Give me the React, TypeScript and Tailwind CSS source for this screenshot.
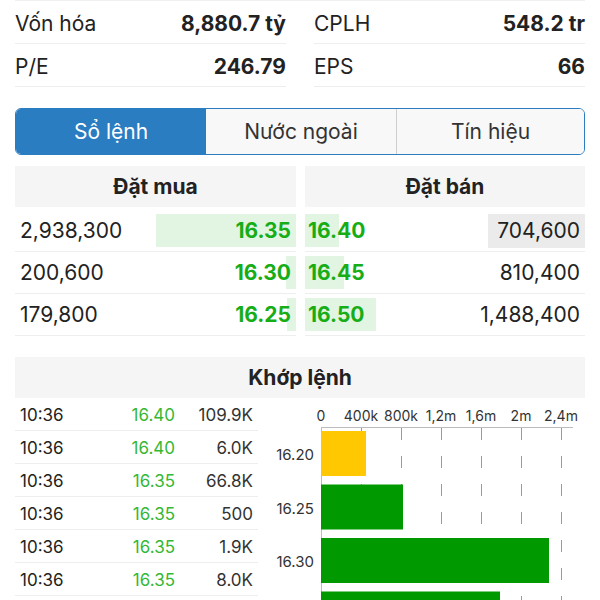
import React from 'react';

const stats = [
  ['Vốn hóa', '8,880.7 tỷ', 'CPLH', '548.2 tr'],
  ['P/E', '246.79', 'EPS', '66'],
];

const bids = [
  { vol: '2,938,300', n: 2938300, price: '16.35' },
  { vol: '200,600', n: 200600, price: '16.30' },
  { vol: '179,800', n: 179800, price: '16.25' },
];

const asks = [
  { vol: '704,600', n: 704600, price: '16.40', mark: true },
  { vol: '810,400', n: 810400, price: '16.45' },
  { vol: '1,488,400', n: 1488400, price: '16.50' },
];

const trades = [
  ['10:36', '16.40', '109.9K'],
  ['10:36', '16.40', '6.0K'],
  ['10:36', '16.35', '66.8K'],
  ['10:36', '16.35', '500'],
  ['10:36', '16.35', '1.9K'],
  ['10:36', '16.35', '8.0K'],
];

const ticks = ['0', '400k', '800k', '1,2m', '1,6m', '2m', '2,4m'];

// last bar runs past the bottom of the screen, its label is not visible
const bars = [
  { p: '16.20', v: 450000, c: '#ffc800' },
  { p: '16.25', v: 820000, c: '#009a00' },
  { p: '16.30', v: 2280000, c: '#009a00' },
  { p: '', v: 1790000, c: '#009a00' },
];

function VolumeChart() {
  const x0 = 51;
  return (
    <svg width="315" height="210" className="font-['Inter',sans-serif]">
      {ticks.map((t, i) => (
        <text key={t} x={x0 + 40 * i} y={23} textAnchor="middle" style={{ fontSize: '14px' }} fill="#333">
          {t}
        </text>
      ))}
      {ticks.slice(1).map((t, i) => (
        <line
          key={t}
          x1={x0 + 40 * (i + 1) + 0.5}
          x2={x0 + 40 * (i + 1) + 0.5}
          y1={30}
          y2={210}
          stroke="#9a9a9a"
          strokeDasharray="12 16"
        />
      ))}
      <line x1={x0} x2={303} y1={29.5} y2={29.5} stroke="#bdbdbd" />
      <line x1={x0 + 0.5} x2={x0 + 0.5} y1={29} y2={210} stroke="#bdbdbd" />
      {bars.map((b, i) => {
        const y = 33 + i * 53.5;
        return (
          <g key={i}>
            <rect x={x0} y={y} width={b.v / 10000} height={45} fill={b.c} />
            {b.p && (
              <text x={44} y={y + 29} textAnchor="end" style={{ fontSize: '15px' }} fill="#333">
                {b.p}
              </text>
            )}
          </g>
        );
      })}
    </svg>
  );
}

export default function App() {
  return (
    <div className="h-[600px] w-[600px] overflow-hidden bg-white px-[15px] font-['Inter',sans-serif] text-[#222]">
      {/* Stats */}
      <div className="grid grid-cols-2 gap-x-[28px] border-t border-[#f0f0f0]">
        {stats.map((r) => (
          <React.Fragment key={r[0]}>
            <div className="flex h-[43px] items-center justify-between border-b border-[#eeeeee] pt-[3px] text-[21px]">
              <span>{r[0]}</span>
              <span className="font-bold">{r[1]}</span>
            </div>
            <div className="flex h-[43px] items-center justify-between border-b border-[#eeeeee] pt-[3px] text-[21px]">
              <span>{r[2]}</span>
              <span className="font-bold">{r[3]}</span>
            </div>
          </React.Fragment>
        ))}
      </div>

      {/* Tabs */}
      <div className="mt-[21px] flex h-[47px] overflow-hidden rounded-[6px] border border-[#2b7dc1] text-[21px]">
        <div className="flex w-[190px] items-center justify-center bg-[#2b7dc1] text-white">Sổ lệnh</div>
        <div className="flex w-[190px] items-center justify-center bg-[#f8f8f8] text-[#333]">Nước ngoài</div>
        <div className="flex flex-1 items-center justify-center border-l border-[#cfcfcf] bg-[#f8f8f8] text-[#333]">
          Tín hiệu
        </div>
      </div>

      {/* Order book */}
      <div className="mt-[11px] grid grid-cols-[281px_280px] gap-x-[9px]">
        <div>
          <div className="flex h-[41px] items-center justify-center bg-[#f5f5f5] text-[21px] font-bold">Đặt mua</div>
          <div className="mt-[3px]">
            {bids.map((b) => (
              <div key={b.price} className="relative flex h-[42px] items-center justify-between border-b border-[#eeeeee] pl-[5px] pr-[5px] pt-[1px] text-[21px]">
                <div
                  className="absolute right-0 top-[4px] h-[33px] bg-[#e2f5e2]"
                  style={{ width: `${b.n / 21000}px` }}
                />
                <span className="relative">{b.vol}</span>
                <span className="relative font-bold text-[#17ad17]">{b.price}</span>
              </div>
            ))}
          </div>
        </div>
        <div>
          <div className="flex h-[41px] items-center justify-center bg-[#f5f5f5] text-[21px] font-bold">Đặt bán</div>
          <div className="mt-[3px]">
            {asks.map((a) => (
              <div key={a.price} className="relative flex h-[42px] items-center justify-between border-b border-[#eeeeee] pl-[3px] text-[21px]">
                <div
                  className="absolute left-0 top-[4px] h-[33px] bg-[#e2f5e2]"
                  style={{ width: `${a.n / 21000}px` }}
                />
                <span className="relative pt-[1px] font-bold text-[#17ad17]">{a.price}</span>
                <span
                  className={`relative flex h-[34px] items-center pl-[9px] pr-[5px] pt-[1px] ${a.mark ? 'bg-[#ebebeb]' : ''}`}
                >
                  {a.vol}
                </span>
              </div>
            ))}
          </div>
        </div>
      </div>

      {/* Matched orders */}
      <div className="mt-[21px] flex h-[41px] items-center justify-center bg-[#f5f5f5] pt-[1px] text-[21px] font-bold">Khớp lệnh</div>
      <div className="flex">
        <div className="w-[243px]">
          {trades.map((t, i) => (
            <div key={i} className="flex h-[33px] items-center border-b border-[#eeeeee] pl-[5px] pt-[4px] text-[17px]">
              <span className="w-[100px]">{t[0]}</span>
              <span className="w-[55px] text-right text-[#35b835]">{t[1]}</span>
              <span className="w-[78px] text-right text-[#333]">{t[2]}</span>
            </div>
          ))}
        </div>
        <div className="ml-[12px]">
          <VolumeChart />
        </div>
      </div>
    </div>
  );
}
